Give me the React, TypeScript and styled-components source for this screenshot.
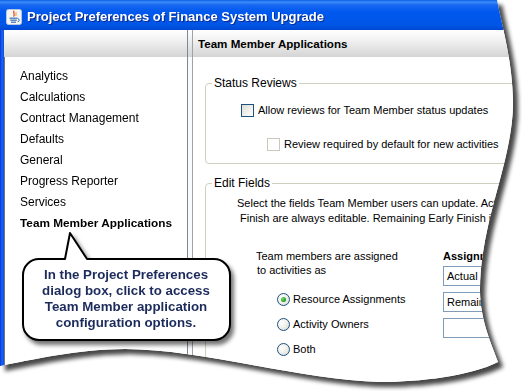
import React from "react";
import styled, { createGlobalStyle } from "styled-components";

const Global = createGlobalStyle`
  html, body { margin: 0; padding: 0; background: #fff; }
  body { width: 522px; height: 391px; overflow: hidden; font-family: "Liberation Sans", Arial, sans-serif; }
  #root { width: 522px; height: 391px; }
`;

const TORN =
  "path('M0 0 L497 0 C503 30 512 60 513 100 C514 160 480 220 480 290 C480 320 492 345 498 362 C470 376 420 382 380 382 C300 380 200 349 125 349 C80 349 30 360 0 366 Z')";

const Stage = styled.div`
  position: relative;
  width: 522px;
  height: 391px;
  overflow: hidden;
`;

const Sheet = styled.div`
  width: 522px;
  height: 391px;
  filter: drop-shadow(5px 5px 2px rgba(0, 0, 0, 0.72));
`;

const Window = styled.div`
  width: 520px;
  height: 391px;
  clip-path: ${TORN};
  display: flex;
  flex-direction: column;
  background: #fff;
`;

const TitleBar = styled.div`
  height: 30px;
  flex: none;
  box-sizing: border-box;
  display: flex;
  align-items: center;
  gap: 5px;
  padding: 3px 0 0 6px;
  background: linear-gradient(
    to bottom,
    #0b5be6 0%,
    #3d8ef8 7%,
    #1868f2 16%,
    #0058ee 40%,
    #0055e5 85%,
    #0047d2 100%
  );
  color: #fff;
  font: bold 13px "Liberation Sans", Arial, sans-serif;
  text-shadow: 1px 1px 0 #0b2a8a;
  white-space: nowrap;
`;

const Body = styled.div`
  flex: 1;
  min-height: 0;
  display: flex;
`;

const FrameEdge = styled.div`
  width: 4px;
  flex: none;
  background: linear-gradient(to right, #0831d9, #1a66f0 50%, #0a4de0);
`;

const LeftPane = styled.div`
  width: 184px;
  flex: none;
  box-sizing: border-box;
  display: flex;
  flex-direction: column;
  border-right: 1px solid #7b8896;
`;

const PaneHeader = styled.div`
  height: 27px;
  flex: none;
  box-sizing: border-box;
  display: flex;
  align-items: center;
  padding-left: 5px;
  background: linear-gradient(to bottom, #ffffff 0%, #f3f3f3 35%, #d4d4d4 100%);
  font: bold 11.6px "Liberation Sans", Arial, sans-serif;
  color: #000;
  white-space: nowrap;
`;

const NavList = styled.div`
  flex: 1;
  background: #fff;
  border-left: 1px solid #6d7782;
  padding: 9px 0 0 15px;
  display: flex;
  flex-direction: column;
`;

const NavItem = styled.div<{ $active?: boolean }>`
  height: 21px;
  line-height: 21px;
  font-size: ${(p) => (p.$active ? "11.8px" : "12px")};
  font-weight: ${(p) => (p.$active ? "bold" : "normal")};
  color: #000;
  white-space: nowrap;
`;

const Splitter = styled.div`
  width: 4px;
  flex: none;
  background: linear-gradient(to bottom, #ffffff 0, #d4d4d4 27px, #fafafa 27px, #fafafa 100%);
`;

const RightPane = styled.div`
  flex: 1;
  min-width: 0;
  display: flex;
  flex-direction: column;
  border-left: 1px solid #a2a2a2;
  overflow: hidden;
`;

const Content = styled.div`
  flex: 1;
  background: #fff;
  padding-left: 12px;
  display: flex;
  flex-direction: column;
`;

const GroupBox = styled.div<{ $top: number; $pad: string }>`
  position: relative;
  width: 340px;
  flex: none;
  box-sizing: border-box;
  margin-top: ${(p) => p.$top}px;
  border: 1px solid #d0d0bf;
  border-radius: 4px;
  padding: ${(p) => p.$pad};
  font-size: 11px;
  color: #000;
`;

const Legend = styled.span`
  position: absolute;
  top: -8px;
  left: 6px;
  padding: 0 2px;
  background: #fff;
  font-size: 12px;
  line-height: 14px;
  white-space: nowrap;
`;

const CheckRow = styled.label<{ $indent: number; $gapTop?: number }>`
  display: flex;
  align-items: center;
  gap: 4px;
  height: 20px;
  padding-left: ${(p) => p.$indent}px;
  margin-top: ${(p) => p.$gapTop ?? 0}px;
  white-space: nowrap;
`;

const CheckBox = styled.span<{ $disabled?: boolean }>`
  width: 13px;
  height: 13px;
  flex: none;
  box-sizing: border-box;
  border: 1px solid ${(p) => (p.$disabled ? "#cac8bb" : "#1c5180")};
  background: ${(p) =>
    p.$disabled ? "#fff" : "linear-gradient(135deg, #dcdcd7 0%, #f2f2ee 60%, #ffffff 100%)"};
`;

const Desc = styled.div<{ $indent: number }>`
  padding-left: ${(p) => p.$indent}px;
  line-height: 15px;
  white-space: nowrap;
`;

const DescBlock = styled.div`
  display: flex;
  flex-direction: column;
`;

const Columns = styled.div`
  display: flex;
  margin-top: 23px;
  padding-left: 50px;
`;

const LeftCol = styled.div`
  width: 187px;
  flex: none;
  display: flex;
  flex-direction: column;
`;

const RightCol = styled.div`
  display: flex;
  flex-direction: column;
`;

const Caption = styled.div<{ $indent?: number; $bold?: boolean }>`
  line-height: 14px;
  padding-left: ${(p) => p.$indent ?? 0}px;
  font-weight: ${(p) => (p.$bold ? "bold" : "normal")};
  white-space: nowrap;
`;

const RadioList = styled.div`
  display: flex;
  flex-direction: column;
  gap: 5px;
  margin-top: 12px;
  padding-left: 21px;
`;

const RadioRow = styled.label`
  display: flex;
  align-items: center;
  gap: 3px;
  height: 20px;
  white-space: nowrap;
`;

const Radio = styled.span<{ $checked?: boolean }>`
  position: relative;
  width: 13px;
  height: 13px;
  flex: none;
  box-sizing: border-box;
  border-radius: 50%;
  border: 1px solid #1c5180;
  background: radial-gradient(circle at 35% 35%, #ffffff 0%, #f1f1ec 45%, #d6d6cf 100%);
  &::after {
    content: "";
    display: ${(p) => (p.$checked ? "block" : "none")};
    position: absolute;
    left: 3px;
    top: 3px;
    width: 5px;
    height: 5px;
    border-radius: 50%;
    background: radial-gradient(circle at 35% 35%, #7be07b 0%, #21a121 60%, #1a7e1a 100%);
  }
`;

const FieldList = styled.div`
  display: flex;
  flex-direction: column;
  gap: 6px;
  margin-top: 3px;
`;

const Field = styled.div`
  width: 120px;
  height: 20px;
  box-sizing: border-box;
  border: 1px solid #7f9db9;
  background: #fff;
  padding-left: 3px;
  line-height: 18px;
  white-space: nowrap;
  overflow: hidden;
`;

const Callout = styled.div`
  position: absolute;
  left: 20px;
  top: 230px;
  width: 214px;
  height: 116px;
  filter: drop-shadow(3px 4px 2px rgba(0, 0, 0, 0.55));
`;

const CalloutShape = styled.svg`
  position: absolute;
  left: 0;
  top: 0;
  overflow: visible;
`;

const CalloutText = styled.div`
  position: absolute;
  left: 2px;
  top: 37px;
  width: 208px;
  text-align: center;
  font: bold 13.3px/16px "Liberation Sans", Arial, sans-serif;
  color: #1c2b5c;
  white-space: nowrap;
`;

const JavaIcon = () => (
  <svg width="16" height="16" viewBox="0 0 16 16">
    <rect x="0.5" y="0.5" width="15" height="15" rx="2" fill="#f5f5f5" stroke="#b9c6de" />
    <path d="M8.2 1.8 C6.2 3.8 9.8 4.8 7.6 7.6" fill="none" stroke="#e2531d" strokeWidth="1.3" />
    <path d="M10.2 3.2 C9.2 4.6 10.8 5.2 9.8 6.8" fill="none" stroke="#f08a24" strokeWidth="1" />
    <path d="M3.5 9.2 H11.5" stroke="#3a6fb0" strokeWidth="1.2" />
    <path d="M4.2 11.2 H10.8" stroke="#3a6fb0" strokeWidth="1.2" />
    <path d="M5 13.2 H10" stroke="#3a6fb0" strokeWidth="1.2" />
    <path d="M11.6 9.6 a1.6 1.6 0 0 1 0 3.2" fill="none" stroke="#3a6fb0" strokeWidth="1" />
  </svg>
);

const navItems = [
  "Analytics",
  "Calculations",
  "Contract Management",
  "Defaults",
  "General",
  "Progress Reporter",
  "Services",
];

export default function App() {
  return (
    <Stage>
      <Global />
      <Sheet>
        <Window>
          <TitleBar>
            <JavaIcon />
            <span>Project Preferences of Finance System Upgrade</span>
          </TitleBar>
          <Body>
            <FrameEdge />
            <LeftPane>
              <PaneHeader />
              <NavList>
                {navItems.map((n) => (
                  <NavItem key={n}>{n}</NavItem>
                ))}
                <NavItem $active>Team Member Applications</NavItem>
              </NavList>
            </LeftPane>
            <Splitter />
            <RightPane>
              <PaneHeader>Team Member Applications</PaneHeader>
              <Content>
                <GroupBox $top={26} $pad="16px 0 9px 0">
                  <Legend>Status Reviews</Legend>
                  <CheckRow $indent={35}>
                    <CheckBox />
                    Allow reviews for Team Member status updates
                  </CheckRow>
                  <CheckRow $indent={61} $gapTop={14}>
                    <CheckBox $disabled />
                    Review required by default for new activities
                  </CheckRow>
                </GroupBox>
                <GroupBox $top={19} $pad="12px 0 40px 0">
                  <Legend>Edit Fields</Legend>
                  <DescBlock>
                    <Desc $indent={31}>
                      Select the fields Team Member users can update. Actual Start and Actual
                    </Desc>
                    <Desc $indent={34}>
                      Finish are always editable. Remaining Early Finish is only editable
                    </Desc>
                  </DescBlock>
                  <Columns>
                    <LeftCol>
                      <Caption>Team members are assigned</Caption>
                      <Caption $indent={1}>to activities as</Caption>
                      <RadioList>
                        <RadioRow>
                          <Radio $checked />
                          Resource Assignments
                        </RadioRow>
                        <RadioRow>
                          <Radio />
                          Activity Owners
                        </RadioRow>
                        <RadioRow>
                          <Radio />
                          Both
                        </RadioRow>
                      </RadioList>
                    </LeftCol>
                    <RightCol>
                      <Caption $bold>Assignment Fields</Caption>
                      <FieldList>
                        <Field>Actual Units</Field>
                        <Field>Remaining Units</Field>
                        <Field />
                      </FieldList>
                    </RightCol>
                  </Columns>
                </GroupBox>
              </Content>
            </RightPane>
          </Body>
        </Window>
      </Sheet>
      <Callout>
        <CalloutShape width="214" height="116" viewBox="0 0 214 116">
          <path
            d="M19 29 L45 29 L50 3 L67 29 L194 29 A16 16 0 0 1 210 45 L210 94 A16 16 0 0 1 194 110 L19 110 A16 16 0 0 1 3 94 L3 45 A16 16 0 0 1 19 29 Z"
            fill="#fff"
            stroke="#000"
            strokeWidth="2"
            strokeLinejoin="round"
          />
        </CalloutShape>
        <CalloutText>
          In the Project Preferences
          <br />
          dialog box, click to access
          <br />
          Team Member application
          <br />
          configuration options.
        </CalloutText>
      </Callout>
    </Stage>
  );
}
